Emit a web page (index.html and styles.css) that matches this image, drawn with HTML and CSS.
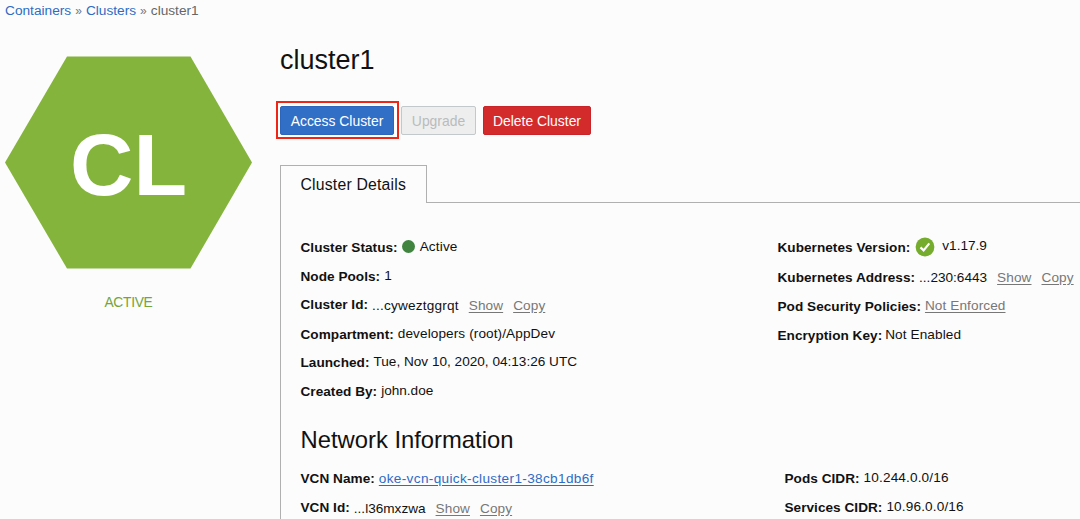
FILE: index.html
```html
<!DOCTYPE html>
<html lang="en">
<head>
<meta charset="utf-8">
<title>cluster1</title>
<link rel="stylesheet" href="styles.css">
</head>
<body>
<nav class="crumbs"><a>Containers</a><span class="sep">»</span><a>Clusters</a><span class="sep">»</span><span class="here">cluster1</span></nav>
<div class="page">
  <aside class="side">
    <svg class="hexagon" viewBox="0 0 247 213"><path d="M62 0.500H185.500L247 106.500L185.500 212.500H62L0 106.500Z" fill="#85b43c"/><text x="65" y="138.500" textLength="117" lengthAdjust="spacingAndGlyphs">CL</text></svg>
    <div class="state">ACTIVE</div>
  </aside>
  <main class="main">
    <h1>cluster1</h1>
    <div class="actions">
      <div class="highlight"><button class="btn primary">Access Cluster</button></div>
      <button class="btn disabled">Upgrade</button>
      <button class="btn danger">Delete Cluster</button>
    </div>
    <div class="tabs"><div class="tab">Cluster Details</div><div class="rule"></div></div>
    <section class="panel">
      <div class="columns details">
        <div class="col">
          <div class="row r28"><b>Cluster Status:</b><i class="dot"></i><span class="up active">Active</span></div>
          <div class="row r28"><b>Node Pools:</b><span class="up">1</span></div>
          <div class="row r30"><b>Cluster Id:</b><span class="down id">...cyweztggrqt</span><a class="down">Show</a><a class="down">Copy</a></div>
          <div class="row r28"><b>Compartment:</b><span class="up comp">developers (root)/AppDev</span></div>
          <div class="row r28"><b>Launched:</b><span class="up date">Tue, Nov 10, 2020, 04:13:26 UTC</span></div>
          <div class="row r29"><b>Created By:</b><span class="up">john.doe</span></div>
        </div>
        <div class="col right">
          <div class="row r30"><b>Kubernetes Version:</b><svg class="check" viewBox="0 0 20 20"><circle cx="10" cy="10" r="9.400" fill="#75ac2d"/><path d="M5.500 10.400L8.600 13.400L14.300 6.400" fill="none" stroke="#fff" stroke-width="2.200"/></svg><span class="up version">v1.17.9</span></div>
          <div class="row r30"><b>Kubernetes Address:</b><span class="down">...230:6443</span><a class="down">Show</a><a class="down">Copy</a></div>
          <div class="row r28"><b>Pod Security Policies:</b><a class="up policy">Not Enforced</a></div>
          <div class="row r28"><b>Encryption Key:</b><span class="up key">Not Enabled</span></div>
        </div>
      </div>
      <h2>Network Information</h2>
      <div class="columns">
        <div class="col">
          <div class="row r29"><b>VCN Name:</b><a class="vcn">oke-vcn-quick-cluster1-38cb1db6f</a></div>
          <div class="row r29"><b>VCN Id:</b><span class="down">...l36mxzwa</span><a class="down">Show</a><a class="down">Copy</a></div>
        </div>
        <div class="col cidr">
          <div class="row r29"><b>Pods CIDR:</b><span class="up net">10.244.0.0/16</span></div>
          <div class="row r29"><b>Services CIDR:</b><span class="up net">10.96.0.0/16</span></div>
        </div>
      </div>
    </section>
  </main>
</div>
</body>
</html>
```
FILE: styles.css
```css
* { box-sizing: border-box; }
body { margin: 0; width: 1080px; height: 519px; overflow: hidden; background: #fcfcfc; color: #111; font-family: "Liberation Sans", Arial, sans-serif; font-size: 13.6px; line-height: 16px; }
.crumbs { display: flex; height: 20px; padding: 3px 0 0 5px; font-size: 13.7px; letter-spacing: 0; white-space: nowrap; }
.crumbs a { color: #2f6bc5; }
.sep { margin: 0 4px; font-size: 12px; color: #777; }
.here { color: #666; }
.page { display: flex; height: 499px; }
.side { width: 280px; flex: none; padding: 36px 0 0 5px; }
.hexagon { display: block; width: 247px; height: 213px; }
.hexagon text { fill: #fff; font-size: 88px; font-weight: bold; }
.state { width: 247px; margin-top: 26px; text-align: center; color: #75a43a; font-size: 13.8px; letter-spacing: -0.3px; }
.main { flex: 1; min-width: 0; }
h1 { margin: 23px 0 0; height: 34px; line-height: 34px; font-size: 27px; font-weight: 400; }
.actions { display: flex; align-items: flex-start; height: 38px; margin: 24px 0 26px -4px; }
.highlight { flex: none; border: 2px solid #ed2615; padding: 3px 2px; width: 123px; height: 38px; background: #fff; margin-right: 2px; }
.btn { display: block; height: 29px; padding: 0; border: 1px solid; border-radius: 2px; font-family: inherit; font-size: 13.9px; white-space: nowrap; margin-top: 5px; }
.primary { width: 114px; margin-top: 0; background: #316fc7; border-color: #2c66bb; color: #fff; }
.disabled { width: 75px; background: #eee; border-color: #c3c8ca; color: #b9bcbd; margin-right: 7px; }
.danger { width: 108px; background: #d32b2b; border-color: #c92427; color: #fff; }
.tabs { display: flex; height: 38px; }
.tab { width: 147px; border: 1px solid #b0b0b0; border-bottom: 0; padding: 10px 0 0 19.5px; font-size: 15.8px; letter-spacing: 0.19px; line-height: 18px; white-space: nowrap; }
.rule { flex: 1; border-bottom: 1px solid #b0b0b0; }
.panel { height: 320px; border-left: 1px solid #b0b0b0; padding: 37px 0 0 19.5px; }
.columns { display: flex; }
.details { height: 185px; }
.col { width: 477px; flex: none; }
.right { width: 302px; }
.cidr { margin-left: 7px; width: 290px; }
.row { display: flex; align-items: flex-start; white-space: nowrap; }
.r28 { height: 28.5px; }
.r29 { height: 29px; }
.r30 { height: 29.5px; }
.row b { margin-right: 4px; flex: none; letter-spacing: 0.03px; }
.row a { color: #777; text-decoration: underline; text-underline-offset: 2px; margin-left: 10px; letter-spacing: 0.1px; }
.row a.policy { margin-left: 0; }
.row a.vcn { margin-left: 0; color: #2f6bc5; letter-spacing: 0.34px; }
.up { margin-top: -1px; }
.down { margin-top: 0.5px; }
.id { letter-spacing: 0.2px; }
.comp { letter-spacing: 0.1px; }
.active { letter-spacing: 0.15px; }
.net { letter-spacing: 0.15px; }
.key { margin-left: -1px; letter-spacing: 0.1px; }
.dot { width: 13px; height: 13px; border-radius: 50%; background: #418440; margin: 0 5px 0 0; }
.check { width: 20px; height: 20px; margin: -3px 7px 0 1px; }
.row .version { margin-top: -2px; }
h2 { margin: 0; height: 46px; line-height: 30px; font-size: 23.8px; font-weight: 400; }
```
